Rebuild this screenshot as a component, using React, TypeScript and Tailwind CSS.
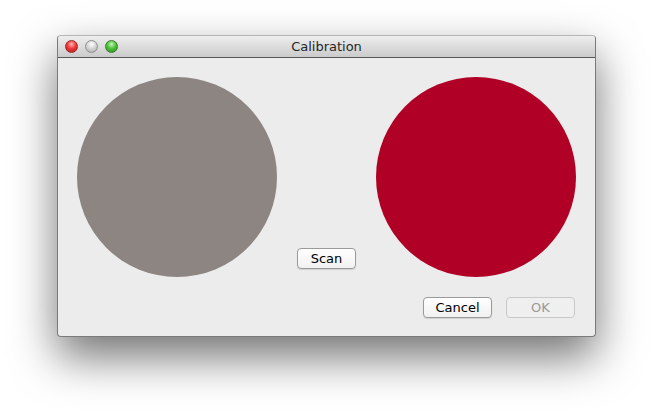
import React from 'react';

function TrafficLight({ color }: { color: 'red' | 'gray' | 'green' }) {
  const bg =
    color === 'red'
      ? 'bg-[radial-gradient(circle_at_50%_30%,#ffb3b3_0%,#f0383c_45%,#b5151b_100%)] border-[#9a2a2a]'
      : color === 'green'
      ? 'bg-[radial-gradient(circle_at_50%_30%,#c8f5b8_0%,#4cc43a_45%,#2a8a1c_100%)] border-[#3b7d2c]'
      : 'bg-[radial-gradient(circle_at_50%_30%,#ffffff_0%,#d6d6d6_45%,#a9a9a9_100%)] border-[#8f8f8f]';
  return <div className={`w-[13px] h-[13px] rounded-full border ${bg}`} />;
}

function MacButton({ label, disabled }: { label: string; disabled?: boolean }) {
  return (
    <button
      className={`h-[21px] rounded-[4px] border text-[13px] leading-none ${
        disabled
          ? 'border-[#c8c8c8] bg-[#efefef] text-[#9a9a9a]'
          : 'border-[#9a9a9a] bg-gradient-to-b from-white to-[#f1f1f1] text-black shadow-[0_1px_1px_rgba(0,0,0,0.12)]'
      }`}
    >
      {label}
    </button>
  );
}

export default function App() {
  return (
    <div className="w-[653px] h-[416px] bg-white pt-[35px] pl-[57px] overflow-hidden font-['DejaVu_Sans','Liberation_Sans',sans-serif]">
      <div className="w-[539px] h-[302px] flex flex-col rounded-[4px] overflow-hidden border border-[#7a7a7a] border-t-[#b5b5b5] shadow-[0_20px_45px_rgba(0,0,0,0.55)] bg-[#ececec]">
        {/* Title bar */}
        <div className="relative h-[22px] shrink-0 flex items-center pl-[7px] gap-[7px] bg-gradient-to-b from-[#eeeeee] to-[#cbcbcb] border-b border-[#565656]">
          <TrafficLight color="red" />
          <TrafficLight color="gray" />
          <TrafficLight color="green" />
          <div className="absolute inset-0 flex items-center justify-center text-[13px] text-[#262626]">
            Calibration
          </div>
        </div>

        {/* Body */}
        <div className="flex-1 flex flex-col pt-[19px] pl-[19px] pr-[19px]">
          <div className="flex items-end justify-between">
            <div className="w-[200px] h-[200px] rounded-full bg-[#8c8582]" />
            <div className="mb-[8px] w-[59px] flex flex-col">
              <MacButton label="Scan" />
            </div>
            <div className="w-[200px] h-[200px] rounded-full bg-[#b00025]" />
          </div>
          <div className="flex justify-end gap-[14px] mt-[20px] pr-[1px]">
            <div className="w-[69px] flex flex-col">
              <MacButton label="Cancel" />
            </div>
            <div className="w-[69px] flex flex-col">
              <MacButton label="OK" disabled />
            </div>
          </div>
        </div>
      </div>
    </div>
  );
}
